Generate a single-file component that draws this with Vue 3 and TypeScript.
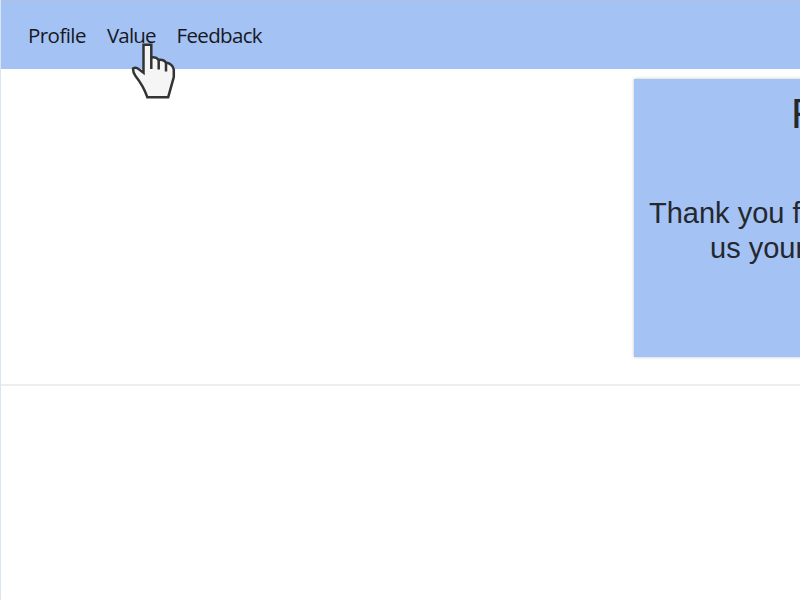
<script setup lang="ts">
interface NavItem {
  label: string
  key: string
}

const items: NavItem[] = [
  { label: 'Profile', key: 'profile' },
  { label: 'Value', key: 'value' },
  { label: 'Feedback', key: 'feedback' },
]
</script>

<template>
  <div class="window">
    <header class="navbar">
      <nav class="links">
        <a v-for="item in items" :key="item.key" class="link" :class="item.key">{{ item.label }}</a>
      </nav>
    </header>
    <main class="content">
      <section class="card">
        <h1 class="title">F</h1>
        <p class="message">Thank you f</p>
        <p class="message second">us your</p>
      </section>
    </main>
    <svg class="pointer" width="48" height="60" viewBox="0 0 48 60" aria-hidden="true">
      <path
        d="M13.5 3.8H21.3V16.6Q26 15.6 28.5 18.8Q33.5 18 35.8 21.4Q42.6 22.6 43.8 28.5V36L38.2 56.2H17.3Q13.5 45 5.5 35Q3 32 3 27.5Q6 25.7 9 28.4L13.5 31.7Z"
        fill="#f5f5f5"
        stroke="#333"
        stroke-width="2.5"
      />
      <path d="M21.3 16V28M28.7 18.5V28.5M36 21.5V30.5" fill="none" stroke="#333" stroke-width="2.5" />
    </svg>
  </div>
</template>

<style>
body {
  margin: 0;
  background: #fff;
}
</style>

<style scoped>
.window {
  position: relative;
  box-sizing: border-box;
  width: 800px;
  height: 600px;
  overflow: hidden;
  border-left: 1px solid #d9e5f3;
  background: #fff;
}

.navbar {
  box-sizing: border-box;
  height: 69px;
  padding: 19px 27px 0;
  border-top: 1px solid #afc0d8;
  background: #a4c2f4;
}

.links {
  display: flex;
}

.link {
  flex: none;
  font: 20.5px/30px "Open Sans", "Noto Sans", sans-serif;
  color: #17191e;
  white-space: nowrap;
}

.profile {
  width: 79px;
  letter-spacing: -0.55px;
}

.value {
  width: 69.5px;
  letter-spacing: -0.85px;
}

.feedback {
  letter-spacing: -0.65px;
}

.content {
  box-sizing: border-box;
  height: 317px;
  padding: 10px 0 0 633px;
  border-bottom: 2px solid #eee;
}

.card {
  box-sizing: border-box;
  width: 300px;
  height: 278px;
  padding-top: 10px;
  background: #a4c2f4;
  box-shadow: 0 0 3px rgba(0, 0, 0, 0.25);
  color: #24282d;
  font-family: "Liberation Sans", Arial, sans-serif;
  white-space: nowrap;
}

.title {
  margin: 0 0 57px;
  padding-left: 157px;
  font-size: 42px;
  font-weight: 400;
  line-height: 50px;
}

.message {
  margin: 0;
  padding-left: 15px;
  font-size: 29px;
  line-height: 35px;
}

.second {
  padding-left: 76px;
}

.pointer {
  position: absolute;
  top: 41px;
  left: 129px;
}
</style>
